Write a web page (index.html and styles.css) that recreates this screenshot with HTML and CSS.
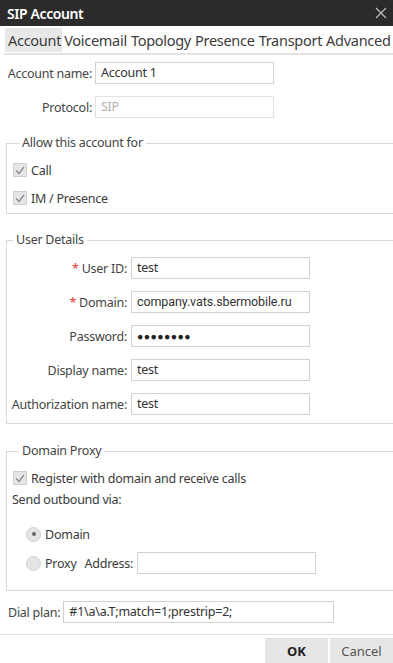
FILE: index.html
```html
<!DOCTYPE html>
<html>
<head>
<meta charset="utf-8">
<link rel="stylesheet" href="styles.css">
</head>
<body>
<div class="dialog">
  <div class="titlebar">
    <span class="title">SIP Account</span>
    <svg class="close" width="12" height="12" viewBox="0 0 12 12"><path d="M1 1L11 11M11 1L1 11" stroke="#bdbdbd" stroke-width="1.2" fill="none"/></svg>
  </div>
  <div class="tabs">
    <span class="tab active">Account</span>
    <span class="tab">Voicemail</span>
    <span class="tab">Topology</span>
    <span class="tab">Presence</span>
    <span class="tab">Transport</span>
    <span class="tab">Advanced</span>
  </div>

  <div class="top-form">
    <div class="row">
      <label class="lbl lbl-top">Account name:</label>
      <div class="input">Account 1</div>
    </div>
    <div class="row">
      <label class="lbl lbl-top">Protocol:</label>
      <div class="input disabled">SIP</div>
    </div>
  </div>

  <fieldset class="group allow">
    <legend>Allow this account for</legend>
    <div class="check-row"><span class="cb"><svg width="10" height="9" viewBox="0 0 10 9"><path d="M1 4.5L4 7.5L9 1" stroke="#8a8a8a" stroke-width="1.3" fill="none"/></svg></span>Call</div>
    <div class="check-row"><span class="cb"><svg width="10" height="9" viewBox="0 0 10 9"><path d="M1 4.5L4 7.5L9 1" stroke="#8a8a8a" stroke-width="1.3" fill="none"/></svg></span>IM / Presence</div>
  </fieldset>

  <fieldset class="group details">
    <legend>User Details</legend>
    <div class="row"><label class="lbl lbl-ud"><span class="req">*</span> User ID:</label><div class="input">test</div></div>
    <div class="row"><label class="lbl lbl-ud"><span class="req">*</span> Domain:</label><div class="input roboto">company.vats.sbermobile.ru</div></div>
    <div class="row"><label class="lbl lbl-ud">Password:</label><div class="input dots">●●●●●●●●</div></div>
    <div class="row"><label class="lbl lbl-ud">Display name:</label><div class="input">test</div></div>
    <div class="row"><label class="lbl lbl-ud">Authorization name:</label><div class="input">test</div></div>
  </fieldset>

  <fieldset class="group proxy">
    <legend>Domain Proxy</legend>
    <div class="check-row"><span class="cb"><svg width="10" height="9" viewBox="0 0 10 9"><path d="M1 4.5L4 7.5L9 1" stroke="#8a8a8a" stroke-width="1.3" fill="none"/></svg></span>Register with domain and receive calls</div>
    <div class="plain">Send outbound via:</div>
    <div class="radio-row"><span class="radio on"></span>Domain</div>
    <div class="radio-row"><span class="radio"></span>Proxy<span class="addr">Address:</span><div class="input addr-input"></div></div>
  </fieldset>

  <div class="row dial">
    <label class="lbl">Dial plan:</label>
    <div class="input dial-input">#1\a\a.T;match=1;prestrip=2;</div>
  </div>

  <div class="footer">
    <button class="btn ok">OK</button>
    <button class="btn">Cancel</button>
  </div>
</div>
</body>
</html>
```

FILE: styles.css
```css
* { box-sizing: border-box; }
html, body { margin: 0; padding: 0; background: #fff; }
body {
  font-family: "Noto Sans", "Open Sans", sans-serif;
  font-size: 12.5px;
  letter-spacing: -0.25px;
  color: #3a3a3a;
  width: 393px;
  height: 663px;
  overflow: hidden;
}
.titlebar {
  height: 26px;
  background: #2b2b2b;
  display: flex;
  align-items: center;
  justify-content: space-between;
  padding: 0 6px 0 7px;
}
.title {
  color: #fff;
  font-size: 14px;
  font-weight: 600;
  letter-spacing: -0.4px;
}
.close { display: block; }
.tabs {
  margin: 2px 0 0 4px;
  padding-left: 1px;
  display: flex;
  border-bottom: 2px solid #e3e3e3;
  height: 27px;
}
.tab {
  font-size: 14.5px;
  line-height: 24px;
  height: 24px;
  padding: 0 2px;
  color: #3c3c3c;
  letter-spacing: -0.28px;
  white-space: nowrap;
}
.tab.active { background: #e8e8e8; padding: 0 1px 0 3px; }

.top-form {
  padding-top: 7px;
  display: flex;
  flex-direction: column;
  gap: 12px;
}
.row {
  display: flex;
  align-items: center;
  height: 22px;
}
.lbl {
  text-align: right;
  padding-right: 3px;
  white-space: nowrap;
  color: #444;
}
.lbl-top { width: 95px; }
.input {
  width: 179px;
  height: 22px;
  border: 1px solid #d2d2d2;
  padding: 0 5px;
  line-height: 20px;
  color: #333;
  white-space: nowrap;
  overflow: hidden;
}
.input.disabled { color: #b0b0b0; border-color: #e2e2e2; }
.roboto { font-family: Roboto, "Noto Sans", sans-serif; font-size: 12.5px; letter-spacing: -0.1px; }
.dots { font-size: 10.5px; letter-spacing: 0.4px; color: #222; }

.group {
  margin: 0 0 0 6px;
  border: 1px solid #d8d8d8;
  border-right: none;
  padding: 0;
  min-width: 0;
}
.group legend {
  margin-left: 6px;
  padding: 0 3px;
  color: #444;
  font-size: 12.5px;
  line-height: 16px;
}
.allow {
  margin-top: 17px;
  padding: 10px 0 7px 6px;
  height: 79px;
}
.check-row {
  display: flex;
  align-items: center;
  height: 18px;
  margin-bottom: 10px;
  white-space: nowrap;
}
.cb {
  width: 14px;
  height: 14px;
  background: #e6e6e6;
  border: 1px solid #cfcfcf;
  display: flex;
  align-items: center;
  justify-content: center;
  margin-right: 4px;
}
.details {
  margin-top: 18px;
  padding: 9px 0 0 0;
  height: 192px;
}
.details .row { margin-bottom: 12px; }
.lbl-ud { width: 124px; padding-right: 4px; }
.req { color: #e53935; }

.proxy {
  margin-top: 19px;
  padding: 10px 0 0 6px;
  height: 148px;
}
.proxy .check-row { margin-bottom: 4px; }
.plain { height: 18px; line-height: 18px; margin-bottom: 14px; margin-left: -1px; }
.radio-row {
  display: flex;
  align-items: center;
  height: 22px;
  margin-bottom: 7px;
  padding-left: 13px;
  white-space: nowrap;
}
.radio {
  width: 15px;
  height: 15px;
  border-radius: 50%;
  background: #e4e4e4;
  border: 1px solid #d0d0d0;
  margin-right: 4px;
  position: relative;
}
.radio.on::after {
  content: "";
  position: absolute;
  left: 4.5px; top: 4.5px;
  width: 4px; height: 4px;
  border-radius: 50%;
  background: #666;
}
.addr { margin-left: 8px; margin-right: 4px; }
.addr-input { width: 179px; }

.dial { margin-top: 10px; padding-left: 8px; }
.dial .lbl { padding-right: 3px; }
.dial-input { width: 271px; }

.footer {
  margin-top: 11px;
  border-top: 1px solid #e2e2e2;
  padding-top: 3px;
  display: flex;
  justify-content: flex-end;
  gap: 2px;
}
.btn {
  border: none;
  background: #e6e6e6;
  font-family: "Noto Sans", sans-serif;
  font-size: 13px;
  color: #555;
  height: 26px;
  width: 63px;
  padding: 0;
}
.btn.ok { width: 63px; font-weight: 700; color: #222; }
```
